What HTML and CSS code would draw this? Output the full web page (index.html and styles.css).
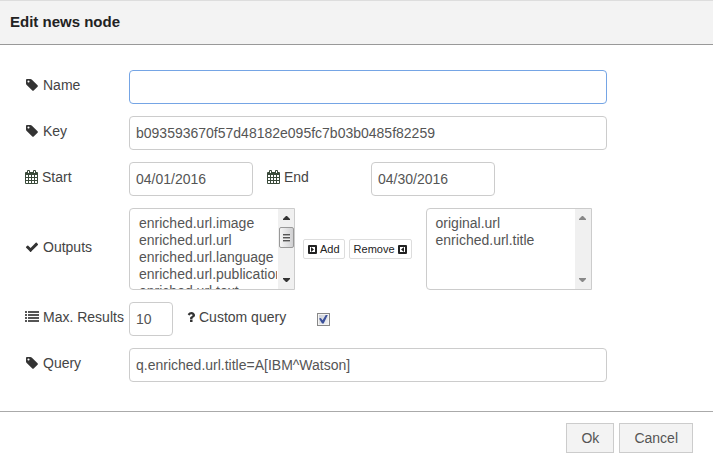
FILE: index.html
```html
<!DOCTYPE html>
<html lang="en">
<head>
<meta charset="utf-8">
<title>Edit news node</title>
<link rel="stylesheet" href="styles.css">
</head>
<body>
<svg class="sprite" aria-hidden="true">
  <symbol id="tag" viewBox="0 0 1792 1792"><path d="M576 448q0-53-37.500-90.500t-90.500-37.500-90.500 37.500-37.500 90.500 37.500 90.500 90.500 37.500 90.500-37.500 37.500-90.500zm1067 576q0 53-37 90l-491 492q-39 37-91 37-53 0-90-37l-715-716q-38-37-64.500-101t-26.500-117v-416q0-52 38-90t90-38h416q53 0 117 26.500t102 64.500l715 714q37 39 37 91z"/></symbol>
  <symbol id="calendar" viewBox="0 0 14 14"><path fill-rule="evenodd" d="M1 2h1V1q0-1 1-1h1q1 0 1 1v1h3V1q0-1 1-1h1q1 0 1 1v1h1q1 0 1 1v10q0 1-1 1H1q-1 0-1-1V3q0-1 1-1zM3 1v2h1V1zM9 1v2h1V1zM1 5v2h2V5zM4 5v2h2V5zM7 5v2h2V5zM10 5v2h2V5zM1 8v2h2V8zM4 8v2h2V8zM7 8v2h2V8zM10 8v2h2V8zM1 11v2h2v-2zM4 11v2h2v-2zM7 11v2h2v-2zM10 11v2h2v-2z"/></symbol>
  <symbol id="check" viewBox="0 0 1792 1792"><path d="M1671 566q0 40-28 68l-724 724-136 136q-28 28-68 28t-68-28l-136-136-362-362q-28-28-28-68t28-68l136-136q28-28 68-28t68 28l294 295 656-657q28-28 68-28t68 28l136 136q28 28 28 68z"/></symbol>
  <symbol id="list" viewBox="0 0 14 14"><path d="M0 1h2v2H0zM0 4h2v2H0zM0 7h2v2H0zM0 10h2v2H0zM3 1h11v2H3zM3 4h11v2H3zM3 7h11v2H3zM3 10h11v2H3z"/></symbol>
  <symbol id="question" viewBox="380 0 1024 1792"><path d="M1088 1256v240q0 16-12 28t-28 12h-240q-16 0-28-12t-12-28v-240q0-16 12-28t28-12h240q16 0 28 12t12 28zm316-600q0 54-15.500 101t-35 76.500-55 59.500-57.500 43.500-61 35.500q-41 23-68.500 65t-27.500 67q0 17-12 32.500t-28 15.500h-240q-15 0-25.500-18.500t-10.500-37.500v-45q0-83 65-156.500t143-108.500q59-27 84-56t25-76q0-42-46.500-74t-107.500-32q-65 0-108 29-35 25-107 115-13 16-31 16-12 0-25-8l-164-125q-13-10-15.500-25t5.500-28q160-266 464-266 80 0 161 31t146 83 106 127.500 41 158.500z"/></symbol>
  <symbol id="caret-right" viewBox="0 0 9 9"><path fill-rule="evenodd" d="M1 0h7q1 0 1 1v7q0 1-1 1H1Q0 9 0 8V1q0-1 1-1zM2 2v5h5V2zM3 2l3 2.500L3 7z"/></symbol>
  <symbol id="caret-left" viewBox="0 0 9 9"><path fill-rule="evenodd" d="M1 0h7q1 0 1 1v7q0 1-1 1H1Q0 9 0 8V1q0-1 1-1zM2 2v5h5V2zM6 2L3 4.500L6 7z"/></symbol>
  <symbol id="arrow-up" viewBox="0 0 7 4"><path d="M3 0h1l3 3v1H0V3z"/></symbol>
  <symbol id="arrow-down" viewBox="0 0 7 4"><path d="M0 0h7v1L4 4H3L0 1z"/></symbol>
</svg>
<form class="dialog">
  <header class="titlebar"><h1>Edit news node</h1></header>
  <div class="fields">
    <div class="row">
      <label for="name"><svg class="icon"><use href="#tag"/></svg>Name</label>
      <input class="wide active" id="name" type="text">
    </div>
    <div class="row">
      <label for="key"><svg class="icon"><use href="#tag"/></svg>Key</label>
      <input class="wide" id="key" type="text" value="b093593670f57d48182e095fc7b03b0485f82259">
    </div>
    <div class="row">
      <label for="start"><svg class="icon date-icon"><use href="#calendar"/></svg>Start</label>
      <input class="date" id="start" type="text" value="04/01/2016">
      <label class="second" for="end"><svg class="icon date-icon"><use href="#calendar"/></svg>End</label>
      <input class="date" id="end" type="text" value="04/30/2016">
    </div>
    <div class="row">
      <label for="outputs"><svg class="icon"><use href="#check"/></svg>Outputs</label>
      <div class="listbox">
        <select id="outputs" multiple>
          <option>enriched.url.image</option>
          <option>enriched.url.url</option>
          <option>enriched.url.language</option>
          <option>enriched.url.publicationDate</option>
          <option>enriched.url.text</option>
        </select>
        <div class="scrollbar" aria-hidden="true"><svg class="arrow"><use href="#arrow-up"/></svg><span class="thumb"></span><svg class="arrow last"><use href="#arrow-down"/></svg></div>
      </div>
      <div class="transfer">
        <button type="button"><svg><use href="#caret-right"/></svg>Add</button>
        <button type="button">Remove<svg><use href="#caret-left"/></svg></button>
      </div>
      <div class="listbox">
        <select id="selected" aria-label="Selected outputs" multiple>
          <option>original.url</option>
          <option>enriched.url.title</option>
        </select>
        <div class="scrollbar idle" aria-hidden="true"><svg class="arrow"><use href="#arrow-up"/></svg><svg class="arrow last"><use href="#arrow-down"/></svg></div>
      </div>
    </div>
    <div class="row">
      <label for="max"><svg class="icon list-icon"><use href="#list"/></svg>Max. Results</label>
      <input class="count" id="max" type="text" value="10">
      <label class="second custom" for="custom"><svg class="icon narrow"><use href="#question"/></svg>Custom query</label>
      <input class="tick" id="custom" type="checkbox" checked>
    </div>
    <div class="row">
      <label for="query"><svg class="icon"><use href="#tag"/></svg>Query</label>
      <input class="wide" id="query" type="text" value="q.enriched.url.title=A[IBM^Watson]">
    </div>
  </div>
  <footer class="actions">
    <button type="button">Ok</button>
    <button type="button">Cancel</button>
  </footer>
</form>
</body>
</html>
```
FILE: styles.css
```css
* {
  box-sizing: border-box;
}

body {
  margin: 0;
  background: #fff;
  color: #444;
  font: 14px/20px "Liberation Sans", Arial, sans-serif;
}

input,
select,
button {
  margin: 0;
  color: #555;
  font: inherit;
}

svg {
  flex: none;
  fill: currentColor;
}

.sprite {
  position: absolute;
  width: 0;
  height: 0;
}

.titlebar {
  padding: 11px 10px 12px;
  border-top: 1px solid #ddd;
  border-bottom: 1px solid #999;
  background: #f3f3f3;
}

.titlebar h1 {
  margin: 0;
  color: #222;
  font-size: 15px;
  line-height: 20px;
}

.fields {
  display: flex;
  flex-direction: column;
  gap: 12px;
  padding: 25px 25px 29px;
}

.row {
  display: flex;
  align-items: center;
}

label {
  display: flex;
  flex: none;
  align-items: center;
  gap: 4px;
  width: 104px;
  padding-bottom: 4px;
  white-space: nowrap;
}

.second {
  margin-left: 14px;
}

.custom {
  width: 130px;
}

.icon {
  width: 14px;
  height: 14px;
  color: #333;
}

.date-icon {
  margin-right: -1px;
  color: #3a4a3a;
}

.list-icon {
  color: #555;
}

.narrow {
  width: 8px;
}

input[type="text"] {
  height: 34px;
  padding: 6px;
  border: 1px solid #ccc;
  border-radius: 4px;
  outline: none;
  background: #fff;
}

.wide {
  flex: 1;
  min-width: 0;
  max-width: 478px;
}

input.active {
  border-color: #75a5e5;
}

.date {
  width: 124px;
}

.count {
  width: 44px;
}

.listbox {
  position: relative;
  flex: none;
  width: 166px;
  height: 82px;
}

.listbox select {
  display: block;
  width: 100%;
  height: 100%;
  padding: 6px 17px 0 6px;
  overflow: hidden;
  border: 1px solid #ccc;
  border-radius: 4px 0 0 4px;
  outline: none;
  background: #fff;
  scrollbar-width: none;
}

.listbox option {
  min-height: 17px;
  padding: 0 3px;
  line-height: 17px;
  overflow: hidden;
}

.scrollbar {
  position: absolute;
  top: 1px;
  right: 1px;
  bottom: 1px;
  display: flex;
  flex-direction: column;
  align-items: center;
  width: 16px;
  background: #f0f0f0;
}

.arrow {
  width: 7px;
  height: 4px;
  margin: 7px 0;
  color: #333;
}

.idle .arrow {
  color: #888;
}

.last {
  margin-top: auto;
}

.thumb {
  display: flex;
  align-items: center;
  justify-content: center;
  width: 15px;
  height: 21px;
  border: 1px solid #999;
  border-radius: 2px;
  background: linear-gradient(90deg, #f5f5f5, #d0d0d2);
}

.thumb::before {
  width: 7px;
  height: 8px;
  background: repeating-linear-gradient(#555 0 1px, #aaa 1px 2px, #eee 2px 3px);
  content: "";
}

.transfer {
  display: flex;
  gap: 4px;
  margin: 0 14px 0 8px;
}

.transfer button {
  display: flex;
  align-items: center;
  gap: 3px;
  height: 20px;
  padding: 0 4px;
  border: 1px solid #ddd;
  border-radius: 2px;
  background: #fff;
  color: #222;
  font-size: 11px;
}

.transfer svg {
  width: 9px;
  height: 9px;
}

.tick {
  display: grid;
  place-items: center;
  width: 13px;
  height: 13px;
  border: 1px solid #888;
  outline: 1px solid #f4f4f4;
  outline-offset: -2px;
  background: linear-gradient(135deg, #c8ccd4, #f6f6f6);
  appearance: none;
}

.tick:checked::before {
  width: 9px;
  height: 9px;
  background: #3c519b;
  clip-path: polygon(0 45%, 20% 40%, 40% 65%, 78% 0, 100% 0, 52% 100%, 34% 100%);
  content: "";
}

.actions {
  display: flex;
  justify-content: flex-end;
  gap: 5px;
  padding: 11px 20px 14px;
  border-top: 1px solid #aaa;
}

.actions button {
  min-width: 48px;
  height: 30px;
  padding: 0 14px;
  border: 1px solid #ccc;
  background: #f3f3f3;
}
```
